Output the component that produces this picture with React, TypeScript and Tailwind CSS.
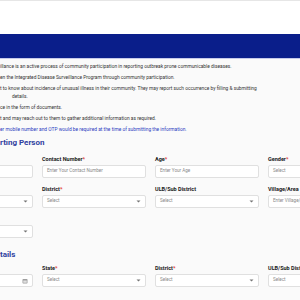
import React from 'react';

type Field = {
    label: string;
    required?: boolean;
    placeholder: string;
    kind?: 'text' | 'select' | 'date';
};

const Chevron = () => (
    <svg width="5" height="3" viewBox="0 0 10 6" className="shrink-0">
        <path d="M1 1l4 4 4-4z" fill="#757575" />
    </svg>
);

const Calendar = () => (
    <svg width="6" height="6" viewBox="0 0 12 12" className="shrink-0">
        <rect x="1" y="2" width="10" height="9" rx="1.5" fill="#9e9e9e" />
        <rect x="2.5" y="5" width="7" height="4.5" fill="#e0e0e0" />
    </svg>
);

const FormField: React.FC<{ field: Field | null }> = ({ field }) => {
    if (!field) return <div />;
    return (
        <div className="flex flex-col">
            <label className="h-[7px] leading-[7px] mb-[2px] text-[5.5px] font-bold text-[#212121] whitespace-nowrap">
                {field.label}
                {field.required && <span className="text-[#e53935]">*</span>}
            </label>
            <div className="h-[13px] bg-white border border-[#e0e0e0] rounded-[2px] flex items-center justify-between px-[4px]">
                <span className="text-[4.6px] text-[#8a8a8a] whitespace-nowrap">{field.placeholder}</span>
                {field.kind === 'select' && <Chevron />}
                {field.kind === 'date' && <Calendar />}
            </div>
        </div>
    );
};

const reporterRows: (Field | null)[][] = [
    [
        { label: 'Name', required: true, placeholder: 'Enter Your Name' },
        { label: 'Contact Number', required: true, placeholder: 'Enter Your Contact Number' },
        { label: 'Age', required: true, placeholder: 'Enter Your Age' },
        { label: 'Gender', required: true, placeholder: 'Select', kind: 'select' },
    ],
    [
        { label: 'State', required: true, placeholder: 'Select', kind: 'select' },
        { label: 'District', required: true, placeholder: 'Select', kind: 'select' },
        { label: 'ULB/Sub District', placeholder: 'Select', kind: 'select' },
        { label: 'Village/Area', placeholder: 'Enter Village/Area' },
    ],
    [{ label: 'Ward', placeholder: 'Select', kind: 'select' }, null, null, null],
];

const detailRows: (Field | null)[][] = [
    [
        { label: 'Date of Onset of Symptoms', required: true, placeholder: 'dd/mm/yyyy', kind: 'date' },
        { label: 'State', required: true, placeholder: 'Select', kind: 'select' },
        { label: 'District', required: true, placeholder: 'Select', kind: 'select' },
        { label: 'ULB/Sub District', placeholder: 'Select', kind: 'select' },
    ],
];

const FormGrid: React.FC<{ rows: (Field | null)[][] }> = ({ rows }) => (
    <div className="-ml-[71px] grid grid-cols-[104px_104px_104px_104px] gap-x-[9px] gap-y-[8px]">
        {rows.flat().map((f, i) => (
            <FormField key={i} field={f} />
        ))}
    </div>
);

export default function App() {
    return (
        <div className="w-full h-[300px] overflow-hidden bg-[#fafafa]" style={{ fontFamily: 'Roboto, "Liberation Sans", sans-serif' }}>
            <header className="h-[34px] bg-white border-t border-[#e6e6e6]" />
            <div className="h-[25px] bg-[#0a1e8a] border-b border-[#c5cae9]" />

            <div className="pt-[4px] text-[4.85px] text-[#333] whitespace-nowrap">
                <p className="leading-[8px] mb-[3px]">illance is an active process of community participation in reporting outbreak prone communicable diseases.</p>
                <p className="leading-[8px] mb-[3px]">en the Integrated Disease Surveillance Program through community participation.</p>
                <p className="leading-[8px]">t to know about incidence of unusual illness in their community. They may report such occurrence by filling &amp; submitting</p>
                <p className="leading-[8px] mb-[3px] pl-[12px]">details.</p>
                <p className="leading-[8px] mb-[3px]">ce in the form of documents.</p>
                <p className="leading-[8px] mb-[3px]">t and may reach out to them to gather additional information as required.</p>
                <p className="leading-[8px] text-[#2b3bbf]">er mobile number and OTP would be required at the time of submitting the information.</p>
            </div>

            <h2 className="mt-[4px] h-[10px] leading-[10px] text-[8px] font-bold text-[#303f9f] whitespace-nowrap">rting Person</h2>
            <div className="mt-[8px]">
                <FormGrid rows={reporterRows} />
            </div>

            <h2 className="mt-[12px] h-[10px] leading-[10px] text-[8px] font-bold text-[#303f9f] whitespace-nowrap">tails</h2>
            <div className="mt-[5px]">
                <FormGrid rows={detailRows} />
            </div>
        </div>
    );
}
